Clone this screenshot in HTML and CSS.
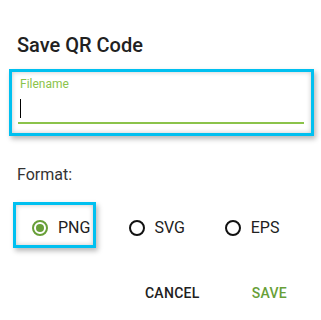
FILE: index.html
```html
<!DOCTYPE html>
<html>
<head>
<meta charset="utf-8">
<link rel="stylesheet" href="styles.css">
</head>
<body>
<div class="dialog">
  <h1 class="title">Save QR Code</h1>
  <div class="highlight field-box">
    <div class="field">
      <div class="label">Filename</div>
      <div class="input"><span class="caret"></span></div>
    </div>
  </div>
  <div class="format">Format:</div>
  <div class="radios">
    <label class="radio highlight first"><span class="circle checked"></span><span class="rtext">PNG</span></label>
    <label class="radio second"><span class="circle"></span><span class="rtext">SVG</span></label>
    <label class="radio"><span class="circle"></span><span class="rtext">EPS</span></label>
  </div>
  <div class="actions">
    <button class="btn cancel">CANCEL</button>
    <button class="btn save">SAVE</button>
  </div>
</div>
</body>
</html>
```

FILE: styles.css
```css
html, body {
  margin: 0;
  padding: 0;
  background: #ffffff;
}
body {
  font-family: Roboto, "Liberation Sans", sans-serif;
  color: #212121;
  width: 321px;
  height: 320px;
  overflow: hidden;
}
.dialog {
  padding-top: 33px;
}
.title {
  margin: 0 0 12px 17px;
  font-size: 20px;
  line-height: 24px;
  font-weight: 500;
  color: #212121;
}
.highlight {
  border: 3px solid #00c0f0;
  box-shadow: 2px 3px 5px rgba(0, 0, 0, 0.28), inset 0 0 5px rgba(0, 0, 0, 0.22);
  box-sizing: border-box;
}
.field-box {
  margin-left: 9px;
  width: 305px;
  height: 67px;
  padding: 5px 7px 0 6px;
}
.field {
  display: flex;
  flex-direction: column;
}
.label {
  font-size: 12px;
  line-height: 14px;
  color: #8bc34a;
  padding-left: 2px;
}
.input {
  height: 29px;
  border-bottom: 2px solid #8bc34a;
  padding: 8px 0 0 2px;
  box-sizing: border-box;
  height: 33px;
}
.caret {
  display: block;
  width: 1px;
  height: 19px;
  background: #000;
}
.format {
  margin: 29px 0 0 17px;
  font-size: 16px;
  line-height: 20px;
  color: #333;
}
.radios {
  display: flex;
  margin-top: 17px;
  padding-left: 13px;
  height: 46px;
}
.radio {
  display: flex;
  align-items: center;
  gap: 10px;
  font-size: 16px;
  width: 97px;
  padding-top: 6px;
  box-sizing: border-box;
  color: #212121;
}
.radio.first {
  width: 83px;
  padding-left: 16px;
  padding-top: 0;
  height: 46px;
}
.radio.second {
  margin-left: 33px;
}
.rtext {
  line-height: 20px;
}
.circle {
  width: 16px;
  height: 16px;
  border: 2px solid #111;
  border-radius: 50%;
  box-sizing: border-box;
  display: flex;
  align-items: center;
  justify-content: center;
  flex: none;
}
.circle.checked {
  border-color: #689f38;
  margin-top: 6px;
}
.circle.checked::after {
  content: "";
  width: 8px;
  height: 8px;
  border-radius: 50%;
  background: #689f38;
}
.first .rtext {
  margin-top: 6px;
}
.actions {
  display: flex;
  justify-content: flex-end;
  gap: 36px;
  margin-top: 37px;
  padding-right: 26px;
}
.btn {
  font-family: Roboto, "Liberation Sans", sans-serif;
  font-size: 14px;
  line-height: 16px;
  font-weight: 500;
  background: none;
  border: none;
  padding: 0 8px;
  margin: 0;
  letter-spacing: 0.3px;
}
.cancel {
  color: #212121;
}
.save {
  color: #689f38;
}
```
